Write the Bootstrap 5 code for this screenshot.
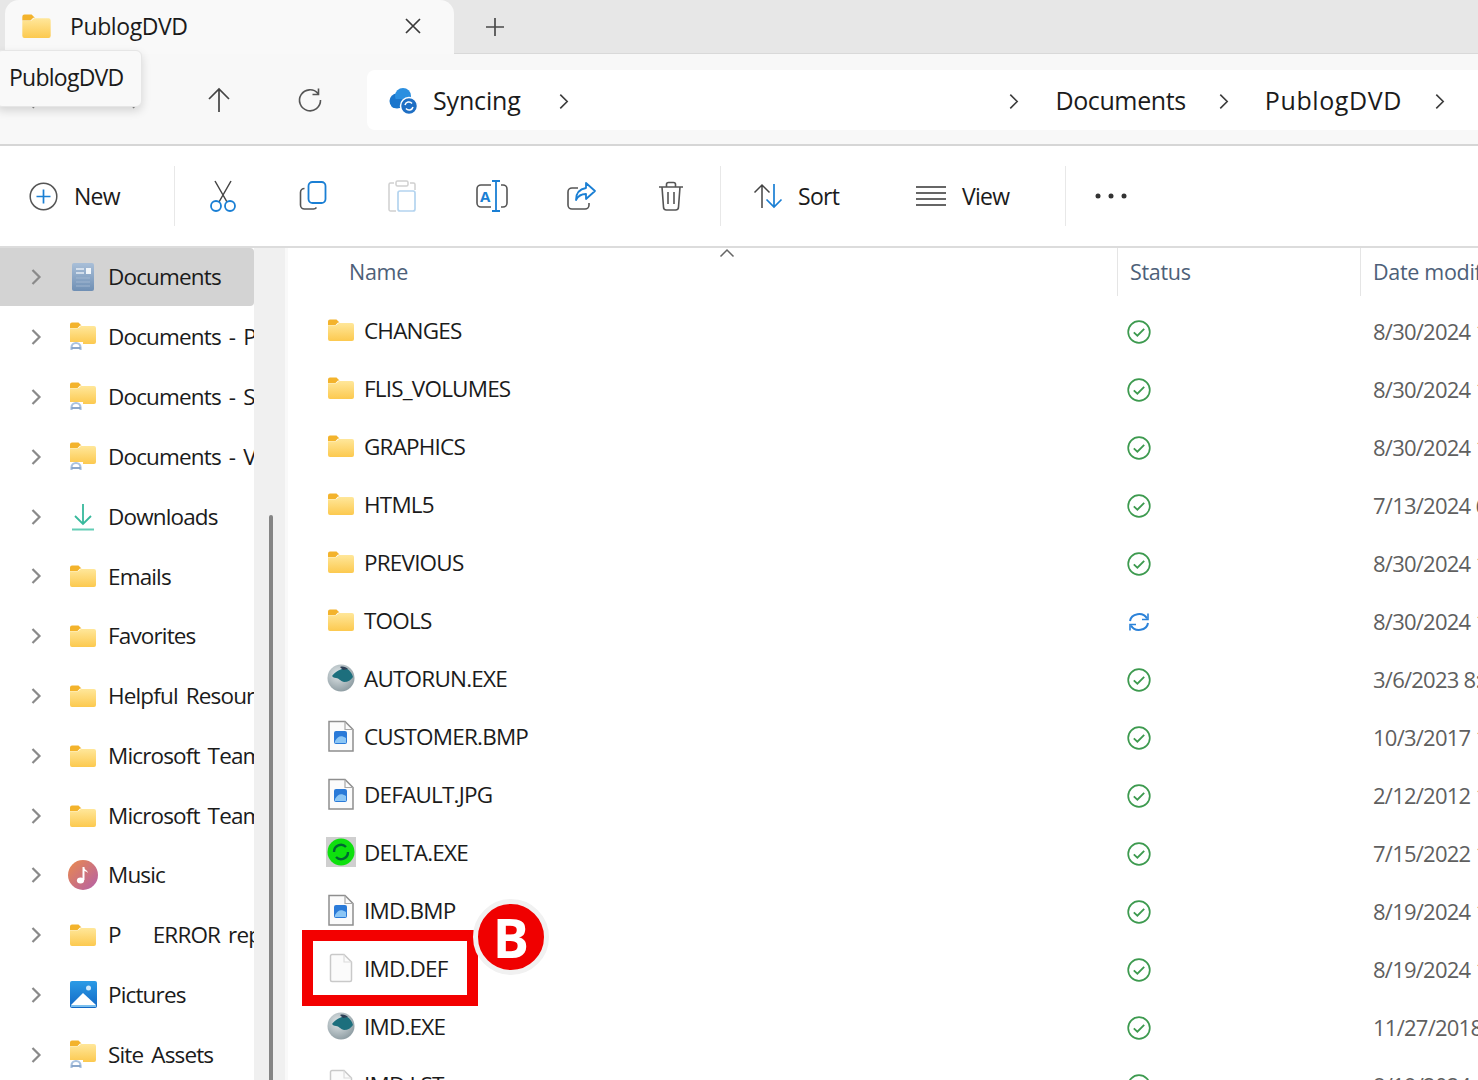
<!DOCTYPE html>
<html lang="en">
<head>
<meta charset="utf-8">
<title>PublogDVD</title>
<link href="https://cdn.jsdelivr.net/npm/bootstrap@5.3.0/dist/css/bootstrap.min.css" rel="stylesheet">
<style>
html,body{height:1080px;overflow:hidden}
body{font-family:"Open Sans","Noto Sans",sans-serif;font-size:23px;letter-spacing:-.75px;color:#1b1b1b;background:#fff;position:relative}
svg{display:block;flex:none}
.tabstrip{height:54px;background:#e7e7e7;border-bottom:1px solid #d9d9d9;padding-left:5px}
.tab-active{width:449px;height:54px;background:#f9f9f9;border-radius:14px 14px 0 0;padding:0 31px 2px 16px}
.tab-title{margin-left:18px;letter-spacing:-.4px}
.tab-add{margin-left:30px}
.addrbar{height:92px;background:#f8f8f8;border-bottom:2px solid #d6d6d6;padding:16px 0 14px 24px}
.nav-gap{width:91px}
.crumbs{flex:1;height:60px;margin-left:44px;background:#fff;border-radius:8px 0 0 8px;padding:2px 32px 0 20px;font-size:25px;letter-spacing:-.38px}
.crumb-sync{margin-left:14px;letter-spacing:-.15px}
.crumb-wide{letter-spacing:.6px}
.crumb-sep{margin:0 35px 0 32px}
.crumb-first{margin-left:37px}
.crumb-fill{flex:1}
.cmdbar{height:102px;border-bottom:2px solid #dcdcdc;padding:20px 0 20px 29px}
.cmd-new{width:145px}
.cmd-new span,.cmd-lab span{margin-left:16px}
.cmd-rule{width:1px;height:60px;background:#e8e8e8}
.cmd-first{margin-left:3.500px}
.cmd-ico{width:89.6px}
.cmd-rule-b{margin-left:4px}
.cmd-sort{width:195px;padding-left:32px}
.cmd-sort span{margin-left:14px}
.cmd-view{width:149px}
.cmd-more{margin-left:29px}
.shell{height:834px;display:flex}
.side{width:254px;overflow:hidden;font-size:22.500px;letter-spacing:-.85px;word-spacing:3px}
.side-row{height:59.8px;padding-left:30px;padding-bottom:1px;white-space:nowrap}
.side-row.on{background:#d3d3d3;border-radius:0 4px 4px 0;height:58px;margin-bottom:1.8px}
.side-ico{width:30px;margin-left:26px;margin-right:10px;display:flex;justify-content:center;flex:none}
.gutter{width:34px;background:#f0f0f0;position:relative;box-shadow:inset -3px 0 0 #f9f9f9}
.scroll-thumb{position:absolute;left:15px;top:267px;bottom:0;width:4px;background:#858585;border-radius:2px}
.files{flex:1;overflow:hidden;min-width:0}
.grid-line{display:grid;grid-template-columns:829px 243px 1fr}
.head-line{height:54px;color:#4d6078;font-size:21.500px;letter-spacing:-.3px;align-items:start;position:relative}
.head-line>div{height:48px;padding-top:8px}
.head-name{padding-left:61px}
.head-col{padding-left:12px;border-left:1px solid #e5e5e5;white-space:nowrap}
.sort-caret{position:absolute;left:431px;top:0}
.file-line{height:58px;align-items:center;white-space:nowrap;font-size:22.500px;letter-spacing:-.8px}
.file-name{padding-left:39px;display:flex;align-items:center;gap:9px}
.file-ico{width:28px;display:flex;justify-content:center;flex:none;margin-top:-2px}
.file-status{padding-left:10px;padding-top:2px}
.file-date{padding-left:13px;color:#5f5f5f;font-size:22px;letter-spacing:-.75px}
.tip{position:absolute;left:-4px;top:50px;width:146px;height:57px;background:#f9f9f9;border:1px solid #e6e6e6;border-radius:6px;box-shadow:0 4px 10px rgba(0,0,0,.14);padding-left:12px;padding-bottom:2px;display:flex;align-items:center;font-size:23px}
.mark-box{position:absolute;left:302px;top:930px;width:176px;height:76px;border:11px solid #f30000;pointer-events:none}
.mark-b{position:absolute;left:473px;top:899px;width:76px;height:76px;border-radius:50%;background:#f00000;border:5px solid #f1f1f1;color:#fff;font:700 54px/66px "Open Sans",sans-serif;letter-spacing:0;text-align:center}
.rename-a{font:700 15px "Open Sans",sans-serif;letter-spacing:0;fill:#1a7fd4}
</style>
</head>
<body>
<svg width="0" height="0" style="position:absolute">
<defs>
<linearGradient id="fg" x1="0" y1="0" x2="0" y2="1"><stop offset="0" stop-color="#ffe79a"/><stop offset="1" stop-color="#fcc94f"/></linearGradient>
<linearGradient id="dg" x1="0" y1="0" x2="0" y2="1"><stop offset="0" stop-color="#a9bfd8"/><stop offset="1" stop-color="#6f8fb4"/></linearGradient>
<linearGradient id="mg" x1="0" y1="0" x2="1" y2="1"><stop offset="0" stop-color="#ea8a4c"/><stop offset="1" stop-color="#b45fa8"/></linearGradient>
<linearGradient id="pg" x1="0" y1="0" x2="0" y2="1"><stop offset="0" stop-color="#2b9be6"/><stop offset="1" stop-color="#1267c4"/></linearGradient>
<radialGradient id="gg" cx=".4" cy=".35" r=".7"><stop offset="0" stop-color="#e2e8ea"/><stop offset="1" stop-color="#8b9aa0"/></radialGradient>
<symbol id="i-folder" viewBox="0 0 28 22"><path d="M1 2.500A2 2 0 0 1 3 .5h6.500l3 3H11L8.500 6H1z" fill="#f3b32c"/><path d="M1 20a2 2 0 0 0 2 2h22a2 2 0 0 0 2-2V6a2 2 0 0 0-2-2H12L9 6.200H1z" fill="url(#fg)"/></symbol>
<symbol id="i-sfolder" viewBox="0 0 28 30"><path d="M1 2.500A2 2 0 0 1 3 .5h6.500l3 3H11L8.500 6H1z" fill="#f3b32c"/><path d="M1 20a2 2 0 0 0 2 2h22a2 2 0 0 0 2-2V6a2 2 0 0 0-2-2H12L9 6.200H1z" fill="url(#fg)"/><rect x="0" y="20" width="14" height="10" fill="#fff"/><path d="M2.500 28v-2.500a4.500 4.500 0 0 1 9 0V28" fill="none" stroke="#a9c2df" stroke-width="2.200"/><path d="M2.500 26h9" stroke="#7f9fc6" stroke-width="1.800"/></symbol>
<symbol id="i-docs" viewBox="0 0 24 30"><rect x="1" y="1" width="22" height="28" rx="2" fill="url(#dg)"/><path d="M5 7h8M5 11h8" stroke="#e6edf5" stroke-width="1.500"/><rect x="15" y="6" width="5" height="6" fill="#f2f6fa"/><path d="M5 16h14M5 20h14M5 24h14" stroke="#9fb6d0" stroke-width="1.200"/></symbol>
<symbol id="i-down" viewBox="0 0 24 28"><path d="M12 1v20M4 13l8 8 8-8" fill="none" stroke="#37b99c" stroke-width="1.800"/><path d="M1 26.500h22" stroke="#63cdb5" stroke-width="2"/></symbol>
<symbol id="i-music" viewBox="0 0 30 30"><circle cx="15" cy="15" r="15" fill="url(#mg)"/><path d="M15.500 7v13" stroke="#fff" stroke-width="2"/><ellipse cx="12.500" cy="20.500" rx="3.600" ry="3" fill="#fff"/><path d="M15.500 7c1 3 4 3 4.500 6-1.500-1.500-3-2-4.500-2z" fill="#fff"/></symbol>
<symbol id="i-pics" viewBox="0 0 27 27"><rect width="27" height="27" rx="2" fill="url(#pg)"/><circle cx="18.500" cy="7" r="2.500" fill="#cfe9fb"/><path d="M1 24L13 12l13 12z" fill="#fff"/><rect x="1" y="24" width="25" height="2" fill="#7cc0ee"/></symbol>
<symbol id="i-globe" viewBox="0 0 28 28"><circle cx="14" cy="14" r="13.500" fill="url(#gg)"/><path d="M5 12c4-5 9-7 13-8 4 1 7 5 8 9-2 3-5 5-9 5-4-1-5-4-8-4-2 0-3-1-4-2z" fill="#1d6f7d"/><path d="M13 3c3-1 6 0 8 2l-5 1z" fill="#2c3f55"/></symbol>
<symbol id="i-img" viewBox="0 0 26 32"><path d="M1 1.500h16l8 8V31H1z" fill="#fbfbfb" stroke="#8e8e8e" stroke-width="1.500"/><path d="M17 1.500v8h8" fill="none" stroke="#a8a8a8" stroke-width="1.200"/><rect x="6" y="11" width="13" height="13" rx="2" fill="#2a7ad8"/><path d="M7 21c3-5 6-6 11-3v5H7z" fill="#8cc6f5"/></symbol>
<symbol id="i-blank" viewBox="0 0 24 30"><path d="M1.500 3a1.500 1.500 0 0 1 1.500-1.500h12l7.500 7.500v18a1.500 1.500 0 0 1-1.500 1.500H3A1.500 1.500 0 0 1 1.500 27z" fill="#fbfbfb" stroke="#c9c9c9" stroke-width="1.500"/><path d="M15 1.500V9h7.500" fill="none" stroke="#dcdcdc" stroke-width="1.200"/></symbol>
<symbol id="i-delta" viewBox="0 0 30 30"><rect width="30" height="30" fill="#cfcfcf"/><circle cx="15" cy="15" r="13.500" fill="#0ee00e"/><path d="M8 15a7 7 0 0 1 12-5M22 15a7 7 0 0 1-12 5" fill="none" stroke="#063" stroke-width="2.400"/></symbol>
<symbol id="i-chev" viewBox="0 0 12 18"><path d="M2.500 2l7 7-7 7" fill="none" stroke="#8a8a8a" stroke-width="2.200"/></symbol>
<symbol id="i-bchev" viewBox="0 0 10 16"><path d="M1.500 1.500L8 8l-6.500 6.500" fill="none" stroke="#3c3c3c" stroke-width="1.500"/></symbol>
<symbol id="i-ok" viewBox="0 0 24 24"><circle cx="12" cy="12" r="10.800" fill="none" stroke="#3d9a4f" stroke-width="1.700"/><path d="M6.800 12.300l3.600 3.400 6.800-6.800" fill="none" stroke="#3d9a4f" stroke-width="1.800"/></symbol>
<symbol id="i-sync" viewBox="0 0 24 24"><path d="M3 11a9 8 0 0 1 17-2.500M21 13a9 8 0 0 1-17 2.500" fill="none" stroke="#2b82d9" stroke-width="2"/><path d="M21 3.500v6h-6M3 20.500v-6h6" fill="none" stroke="#2b82d9" stroke-width="1.600"/></symbol>
</defs>
</svg>

<div class="tabstrip d-flex align-items-start">
  <div class="tab-active d-flex align-items-center">
    <svg width="31" height="24"><use href="#i-folder"/></svg>
    <span class="tab-title flex-grow-1">PublogDVD</span>
    <svg width="20" height="20" viewBox="0 0 20 20"><path d="M3 3l14 14M17 3L3 17" stroke="#3a3a3a" stroke-width="1.700"/></svg>
  </div>
  <div class="tab-add align-self-center"><svg width="22" height="22" viewBox="0 0 22 22"><path d="M11 2v18M2 11h18" stroke="#4a4a4a" stroke-width="1.700"/></svg></div>
</div>

<div class="addrbar d-flex align-items-center">
  <div class="nav-gap"><svg width="28" height="18" viewBox="0 0 28 18"><path d="M27 9H2M10 1L2 9l8 8" fill="none" stroke="#888" stroke-width="1.600"/></svg></div>
  <div class="nav-gap"><svg width="28" height="18" viewBox="0 0 28 18"><path d="M1 9h25M18 1l8 8-8 8" fill="none" stroke="#888" stroke-width="1.600"/></svg></div>
  <div class="nav-gap"><svg width="26" height="28" viewBox="0 0 26 28"><path d="M13 26V3M3 13L13 3l10 10" fill="none" stroke="#444" stroke-width="1.700"/></svg></div>
  <div><svg width="26" height="26" viewBox="0 0 26 26"><path d="M21 6.500A10.500 10.500 0 1 0 23.500 13M21.500 1.500v6h-6" fill="none" stroke="#555" stroke-width="1.600"/></svg></div>
  <div class="crumbs d-flex align-items-center">
    <svg width="32" height="30" viewBox="0 0 32 30"><circle cx="10" cy="15" r="7.500" fill="#1a76cc"/><circle cx="16" cy="10" r="8" fill="#2b8fe0"/><rect x="4" y="13" width="20" height="9" rx="4" fill="#1a76cc"/><circle cx="22" cy="20" r="8.500" fill="#1f6fc4" stroke="#fff" stroke-width="1.500"/><path d="M18 19a4 4 0 0 1 7-1.500M26 21a4 4 0 0 1-7 1.500" fill="none" stroke="#fff" stroke-width="1.500"/></svg>
    <span class="crumb-sync">Syncing</span>
    <span class="crumb-sep crumb-first"><svg width="12" height="17"><use href="#i-bchev"/></svg></span>
    <span class="crumb-fill"></span>
    <span class="crumb-sep"><svg width="12" height="17"><use href="#i-bchev"/></svg></span>
    <span>Documents</span>
    <span class="crumb-sep"><svg width="12" height="17"><use href="#i-bchev"/></svg></span>
    <span class="crumb-wide">PublogDVD</span>
    <span class="crumb-sep me-0"><svg width="12" height="17"><use href="#i-bchev"/></svg></span>
  </div>
</div>

<div class="cmdbar d-flex align-items-center">
  <div class="cmd-new cmd-lab d-flex align-items-center">
    <svg width="29" height="29" viewBox="0 0 29 29"><circle cx="14.500" cy="14.500" r="13.300" fill="none" stroke="#555" stroke-width="1.500"/><path d="M14.500 7.500v14M7.500 14.500h14" stroke="#1a7fd4" stroke-width="1.700"/></svg>
    <span>New</span>
  </div>
  <div class="cmd-rule"></div>
  <div class="cmd-ico cmd-first d-flex justify-content-center"><svg width="28" height="32" viewBox="0 0 28 32"><path d="M6 1l12 21M22 1L10 22" stroke="#444" stroke-width="1.500"/><circle cx="7" cy="26" r="5" fill="none" stroke="#1a7fd4" stroke-width="1.800"/><circle cx="21" cy="26" r="5" fill="none" stroke="#1a7fd4" stroke-width="1.800"/></svg></div>
  <div class="cmd-ico d-flex justify-content-center"><svg width="28" height="30" viewBox="0 0 28 30"><rect x="9.500" y="1" width="17" height="21" rx="4" fill="none" stroke="#1a7fd4" stroke-width="1.800"/><path d="M5.500 7.500A4 4 0 0 0 1.500 11.500V24a4 4 0 0 0 4 4h9a4 4 0 0 0 3-1.500" fill="none" stroke="#555" stroke-width="1.600"/></svg></div>
  <div class="cmd-ico d-flex justify-content-center"><svg width="28" height="32" viewBox="0 0 28 32"><path d="M6 3H2.500A1.500 1.500 0 0 0 1 4.500v25A1.500 1.500 0 0 0 2.500 31H8M22 3h3.500A1.500 1.500 0 0 1 27 4.500V10" fill="none" stroke="#d0d0d0" stroke-width="1.500"/><rect x="8" y="1" width="12" height="5" rx="1.500" fill="none" stroke="#d0d0d0" stroke-width="1.500"/><rect x="10" y="11" width="17" height="20" rx="2" fill="none" stroke="#b4d4ef" stroke-width="1.700"/></svg></div>
  <div class="cmd-ico d-flex justify-content-center"><svg width="32" height="32" viewBox="0 0 32 32"><path d="M15 5H5a4 4 0 0 0-4 4v14a4 4 0 0 0 4 4h10M25 5h2a4 4 0 0 1 4 4v14a4 4 0 0 1-4 4h-2" fill="none" stroke="#555" stroke-width="1.600"/><path d="M16 1h8M16 31h8M20 1v30" stroke="#1a7fd4" stroke-width="1.800"/><text class="rename-a" x="4" y="22">A</text></svg></div>
  <div class="cmd-ico d-flex justify-content-center"><svg width="30" height="30" viewBox="0 0 30 30"><path d="M11 7H5a4 4 0 0 0-4 4v13a4 4 0 0 0 4 4h13a4 4 0 0 0 4-4v-2" fill="none" stroke="#555" stroke-width="1.600"/><path d="M19 2l9 8-9 8v-5c-5 0-8 2-10 6 0-7 4-11 10-12z" fill="none" stroke="#1a7fd4" stroke-width="1.800" stroke-linejoin="round"/></svg></div>
  <div class="cmd-ico d-flex justify-content-center"><svg width="26" height="30" viewBox="0 0 26 30"><path d="M1 6h24M8.500 6V3.500A2 2 0 0 1 10.500 1.500h5a2 2 0 0 1 2 2V6M4 6l1.500 20a3 3 0 0 0 3 3h9a3 3 0 0 0 3-3L22 6M10 11v12M16 11v12" fill="none" stroke="#555" stroke-width="1.600"/></svg></div>
  <div class="cmd-rule cmd-rule-b"></div>
  <div class="cmd-sort cmd-lab d-flex align-items-center">
    <svg width="31" height="26" viewBox="0 0 31 26"><path d="M9 25V2M1.500 9.500L9 2l7.500 7.500" fill="none" stroke="#444" stroke-width="1.500"/><path d="M21 1v23M13.500 16.500L21 24l7.500-7.500" fill="none" stroke="#1a7fd4" stroke-width="1.700"/></svg>
    <span>Sort</span>
  </div>
  <div class="cmd-view cmd-lab d-flex align-items-center">
    <svg width="30" height="22" viewBox="0 0 30 22"><path d="M0 2h30M0 8h30M0 14h30M0 20h30" stroke="#666" stroke-width="1.800"/></svg>
    <span>View</span>
  </div>
  <div class="cmd-rule"></div>
  <div class="cmd-more"><svg width="32" height="6" viewBox="0 0 32 6"><circle cx="3" cy="3" r="2.500" fill="#333"/><circle cx="16" cy="3" r="2.500" fill="#333"/><circle cx="29" cy="3" r="2.500" fill="#333"/></svg></div>
</div>

<div class="shell">
  <div class="side">
    <div class="side-row on d-flex align-items-center"><svg width="12" height="18"><use href="#i-chev"/></svg><span class="side-ico"><svg width="24" height="30"><use href="#i-docs"/></svg></span>Documents</div>
    <div class="side-row d-flex align-items-center"><svg width="12" height="18"><use href="#i-chev"/></svg><span class="side-ico"><svg width="28" height="30"><use href="#i-sfolder"/></svg></span>Documents - Projects</div>
    <div class="side-row d-flex align-items-center"><svg width="12" height="18"><use href="#i-chev"/></svg><span class="side-ico"><svg width="28" height="30"><use href="#i-sfolder"/></svg></span>Documents - Sales</div>
    <div class="side-row d-flex align-items-center"><svg width="12" height="18"><use href="#i-chev"/></svg><span class="side-ico"><svg width="28" height="30"><use href="#i-sfolder"/></svg></span>Documents - Vendors</div>
    <div class="side-row d-flex align-items-center"><svg width="12" height="18"><use href="#i-chev"/></svg><span class="side-ico"><svg width="24" height="28"><use href="#i-down"/></svg></span>Downloads</div>
    <div class="side-row d-flex align-items-center"><svg width="12" height="18"><use href="#i-chev"/></svg><span class="side-ico"><svg width="28" height="22"><use href="#i-folder"/></svg></span>Emails</div>
    <div class="side-row d-flex align-items-center"><svg width="12" height="18"><use href="#i-chev"/></svg><span class="side-ico"><svg width="28" height="22"><use href="#i-folder"/></svg></span>Favorites</div>
    <div class="side-row d-flex align-items-center"><svg width="12" height="18"><use href="#i-chev"/></svg><span class="side-ico"><svg width="28" height="22"><use href="#i-folder"/></svg></span>Helpful Resources</div>
    <div class="side-row d-flex align-items-center"><svg width="12" height="18"><use href="#i-chev"/></svg><span class="side-ico"><svg width="28" height="22"><use href="#i-folder"/></svg></span>Microsoft Teams</div>
    <div class="side-row d-flex align-items-center"><svg width="12" height="18"><use href="#i-chev"/></svg><span class="side-ico"><svg width="28" height="22"><use href="#i-folder"/></svg></span>Microsoft Teams</div>
    <div class="side-row d-flex align-items-center"><svg width="12" height="18"><use href="#i-chev"/></svg><span class="side-ico"><svg width="30" height="30"><use href="#i-music"/></svg></span>Music</div>
    <div class="side-row d-flex align-items-center"><svg width="12" height="18"><use href="#i-chev"/></svg><span class="side-ico"><svg width="28" height="22"><use href="#i-folder"/></svg></span>P<span class="ms-4 ps-2">ERROR reports</span></div>
    <div class="side-row d-flex align-items-center"><svg width="12" height="18"><use href="#i-chev"/></svg><span class="side-ico"><svg width="27" height="27"><use href="#i-pics"/></svg></span>Pictures</div>
    <div class="side-row d-flex align-items-center"><svg width="12" height="18"><use href="#i-chev"/></svg><span class="side-ico"><svg width="28" height="30"><use href="#i-sfolder"/></svg></span>Site Assets</div>
  </div>
  <div class="gutter"><div class="scroll-thumb"></div></div>
  <div class="files">
    <div class="grid-line head-line">
      <div class="head-name">Name</div>
      <div class="head-col">Status</div>
      <div class="head-col">Date modified</div>
      <svg class="sort-caret" width="16" height="10" viewBox="0 0 16 10"><path d="M1.500 8.500L8 2l6.500 6.500" fill="none" stroke="#666" stroke-width="1.500"/></svg>
    </div>
    <div class="grid-line file-line"><div class="file-name"><span class="file-ico"><svg width="28" height="22"><use href="#i-folder"/></svg></span>CHANGES</div><div class="file-status"><svg width="24" height="24"><use href="#i-ok"/></svg></div><div class="file-date">8/30/2024 10:12 AM</div></div>
    <div class="grid-line file-line"><div class="file-name"><span class="file-ico"><svg width="28" height="22"><use href="#i-folder"/></svg></span>FLIS_VOLUMES</div><div class="file-status"><svg width="24" height="24"><use href="#i-ok"/></svg></div><div class="file-date">8/30/2024 10:12 AM</div></div>
    <div class="grid-line file-line"><div class="file-name"><span class="file-ico"><svg width="28" height="22"><use href="#i-folder"/></svg></span>GRAPHICS</div><div class="file-status"><svg width="24" height="24"><use href="#i-ok"/></svg></div><div class="file-date">8/30/2024 10:12 AM</div></div>
    <div class="grid-line file-line"><div class="file-name"><span class="file-ico"><svg width="28" height="22"><use href="#i-folder"/></svg></span>HTML5</div><div class="file-status"><svg width="24" height="24"><use href="#i-ok"/></svg></div><div class="file-date">7/13/2024 6:30 PM</div></div>
    <div class="grid-line file-line"><div class="file-name"><span class="file-ico"><svg width="28" height="22"><use href="#i-folder"/></svg></span>PREVIOUS</div><div class="file-status"><svg width="24" height="24"><use href="#i-ok"/></svg></div><div class="file-date">8/30/2024 10:12 AM</div></div>
    <div class="grid-line file-line"><div class="file-name"><span class="file-ico"><svg width="28" height="22"><use href="#i-folder"/></svg></span>TOOLS</div><div class="file-status"><svg width="24" height="24"><use href="#i-sync"/></svg></div><div class="file-date">8/30/2024 10:12 AM</div></div>
    <div class="grid-line file-line"><div class="file-name"><span class="file-ico"><svg width="28" height="28"><use href="#i-globe"/></svg></span>AUTORUN.EXE</div><div class="file-status"><svg width="24" height="24"><use href="#i-ok"/></svg></div><div class="file-date">3/6/2023 8:45 AM</div></div>
    <div class="grid-line file-line"><div class="file-name"><span class="file-ico"><svg width="26" height="32"><use href="#i-img"/></svg></span>CUSTOMER.BMP</div><div class="file-status"><svg width="24" height="24"><use href="#i-ok"/></svg></div><div class="file-date">10/3/2017 11:20 AM</div></div>
    <div class="grid-line file-line"><div class="file-name"><span class="file-ico"><svg width="26" height="32"><use href="#i-img"/></svg></span>DEFAULT.JPG</div><div class="file-status"><svg width="24" height="24"><use href="#i-ok"/></svg></div><div class="file-date">2/12/2012 10:05 AM</div></div>
    <div class="grid-line file-line"><div class="file-name"><span class="file-ico"><svg width="30" height="30"><use href="#i-delta"/></svg></span>DELTA.EXE</div><div class="file-status"><svg width="24" height="24"><use href="#i-ok"/></svg></div><div class="file-date">7/15/2022 11:40 AM</div></div>
    <div class="grid-line file-line"><div class="file-name"><span class="file-ico"><svg width="26" height="32"><use href="#i-img"/></svg></span>IMD.BMP</div><div class="file-status"><svg width="24" height="24"><use href="#i-ok"/></svg></div><div class="file-date">8/19/2024 10:02 AM</div></div>
    <div class="grid-line file-line"><div class="file-name"><span class="file-ico"><svg width="24" height="30"><use href="#i-blank"/></svg></span>IMD.DEF</div><div class="file-status"><svg width="24" height="24"><use href="#i-ok"/></svg></div><div class="file-date">8/19/2024 10:02 AM</div></div>
    <div class="grid-line file-line"><div class="file-name"><span class="file-ico"><svg width="28" height="28"><use href="#i-globe"/></svg></span>IMD.EXE</div><div class="file-status"><svg width="24" height="24"><use href="#i-ok"/></svg></div><div class="file-date">11/27/2018 9:10 AM</div></div>
    <div class="grid-line file-line"><div class="file-name"><span class="file-ico"><svg width="24" height="30"><use href="#i-blank"/></svg></span>IMD.LST</div><div class="file-status"><svg width="24" height="24"><use href="#i-ok"/></svg></div><div class="file-date">8/19/2024 10:02 AM</div></div>
  </div>
</div>

<div class="tip">PublogDVD</div>
<div class="mark-box"></div>
<div class="mark-b">B</div>
<script src="https://cdn.jsdelivr.net/npm/bootstrap@5.3.0/dist/js/bootstrap.bundle.min.js"></script>
</body>
</html>
